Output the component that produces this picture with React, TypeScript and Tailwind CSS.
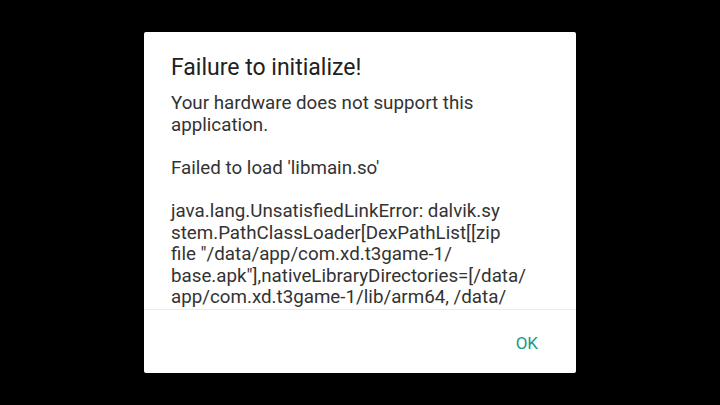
import React from "react";

const trace = [
  "java.lang.UnsatisfiedLinkError: dalvik.sy",
  "stem.PathClassLoader[DexPathList[[zip",
  'file "/data/app/com.xd.t3game-1/',
  'base.apk"],nativeLibraryDirectories=[/data/',
  "app/com.xd.t3game-1/lib/arm64, /data/",
  "app/com.xd.t3game-1/base.apk!/lib/arm64-",
];

export default function App() {
  return (
    <div
      className="w-[720px] h-[405px] bg-black flex items-start justify-center pt-[32px]"
      style={{ fontFamily: "Roboto, 'Noto Sans', sans-serif" }}
    >
      <div className="w-[432px] h-[341px] bg-white rounded-[2px] flex flex-col overflow-hidden">
        {/* message (scrolls on device, clipped here) */}
        <div className="h-[277px] overflow-hidden pl-[27px] pr-[20px] pt-[22px]">
          <h1 className="text-[23px] leading-[28px] text-[#212121]">Failure to initialize!</h1>
          <div className="mt-[11px] text-[18.75px] leading-[21.6px] text-[#333333]">
            <p>Your hardware does not support this</p>
            <p>application.</p>
            <p className="mt-[21.6px]">Failed to load 'libmain.so'</p>
            <div className="mt-[21.6px]">
              {trace.map((l, i) => (
                <p key={i} className="whitespace-nowrap">{l}</p>
              ))}
            </div>
          </div>
        </div>
        <div className="h-[64px] border-t border-[#ebebeb] flex items-center justify-end pr-[38px] pt-[3px]">
          <button className="text-[17px] leading-[17px] text-[#179a89]">OK</button>
        </div>
      </div>
    </div>
  );
}
